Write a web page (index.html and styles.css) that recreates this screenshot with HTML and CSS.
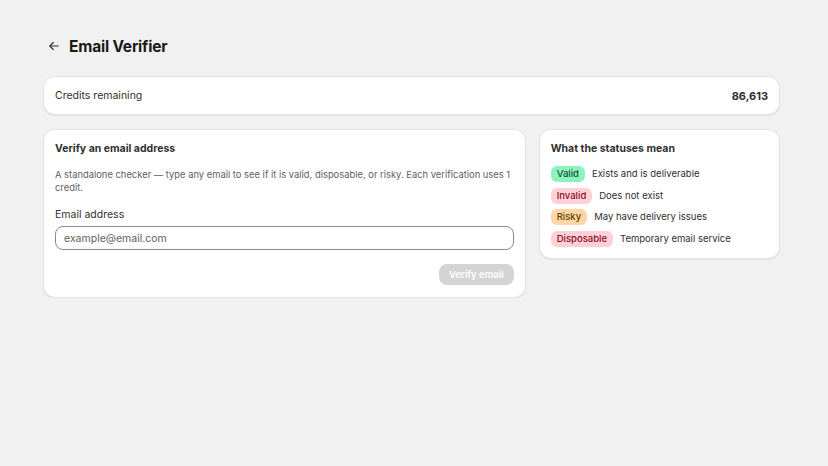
FILE: index.html
```html
<!DOCTYPE html>
<html lang="en">
<head>
    <meta charset="UTF-8">
    <meta name="viewport" content="width=device-width, initial-scale=1.0">
    <title>Email Verifier</title>
    <link rel="stylesheet" href="styles.css">
</head>
<body>

    <div class="page">
        <div class="page-header">
            <button class="back-btn" aria-label="Back">
                <svg width="14" height="14" viewBox="0 0 20 20" fill="none" stroke="#303030" stroke-width="1.6" stroke-linecap="round" stroke-linejoin="round">
                    <path d="M16 10H4.5"/>
                    <path d="M9 5l-5 5 5 5"/>
                </svg>
            </button>
            <h1>Email Verifier</h1>
        </div>

        <div class="card credits">
            <span>Credits remaining</span>
            <span class="credits-value">86,613</span>
        </div>

        <div class="layout">
            <div class="card verify">
                <h2>Verify an email address</h2>
                <p class="hint">A standalone checker — type any email to see if it is valid, disposable, or risky. Each verification uses 1 credit.</p>
                <label class="field-label" for="email">Email address</label>
                <input type="email" id="email" placeholder="example@email.com">
                <div class="actions">
                    <button class="primary" disabled>Verify email</button>
                </div>
            </div>

            <div class="card statuses">
                <h2>What the statuses mean</h2>
                <ul class="status-list">
                    <li><span class="badge success">Valid</span> Exists and is deliverable</li>
                    <li><span class="badge critical">Invalid</span> Does not exist</li>
                    <li><span class="badge warning">Risky</span> May have delivery issues</li>
                    <li><span class="badge critical">Disposable</span> Temporary email service</li>
                </ul>
            </div>
        </div>
    </div>

</body>
</html>
```

FILE: styles.css
```css
body {
    margin: 0;
    background-color: #f1f1f1;
    font-family: Inter, "Noto Sans", sans-serif;
    color: #303030;
    font-size: 10.5px;
}
.page {
    padding: 28px 48px 0 43px;
}
.page-header {
    display: flex;
    align-items: center;
    gap: 6px;
    height: 36px;
    margin-bottom: 12px;
}
.back-btn {
    width: 18px;
    height: 18px;
    margin-left: 2px;
    padding: 0;
    border: none;
    background: none;
    display: flex;
    align-items: center;
    justify-content: center;
}
h1 {
    margin: 0;
    font-size: 15.5px;
    font-weight: 700;
    letter-spacing: -0.2px;
    color: #1a1a1a;
}
h2 {
    margin: 0;
    font-size: 10.5px;
    font-weight: 650;
    line-height: 16px;
    color: #303030;
}
.card {
    background-color: white;
    border-radius: 12px;
    box-shadow: 0 1px 0 0 rgba(26, 26, 26, 0.07), inset 0 0 0 1px #e3e3e3, inset 0 -1px 0 0 #d4d4d4;
    padding: 12px;
}
.credits {
    display: flex;
    justify-content: space-between;
    align-items: center;
    line-height: 16px;
    padding: 12px 12px 11px;
}
.credits-value {
    font-weight: 650;
    font-size: 11px;
}
.layout {
    display: grid;
    grid-template-columns: 2fr 1fr;
    gap: 13px;
    margin-top: 14px;
    align-items: start;
}
.verify {
    padding-bottom: 13px;
}
.hint {
    margin: 12px 0 0;
    font-size: 9.4px;
    line-height: 12.5px;
    color: #616161;
}
.field-label {
    display: block;
    margin-top: 13px;
    line-height: 16px;
}
input {
    box-sizing: border-box;
    display: block;
    width: 100%;
    height: 24px;
    margin-top: 3px;
    padding: 0 8px;
    border: 1px solid #8a8a8a;
    border-radius: 8px;
    font-family: inherit;
    font-size: 10.5px;
    color: #303030;
}
input::placeholder {
    color: #616161;
}
.actions {
    display: flex;
    justify-content: flex-end;
    margin-top: 14px;
}
.primary {
    height: 21px;
    padding: 0 10px;
    border: none;
    border-radius: 8px;
    background-color: #d4d4d4;
    color: white;
    font-family: inherit;
    font-size: 9.5px;
    font-weight: 600;
}
.status-list {
    list-style: none;
    margin: 9px 0 0;
    padding: 0;
    display: flex;
    flex-direction: column;
    gap: 5.5px;
}
.status-list li {
    display: flex;
    align-items: center;
    gap: 7px;
    font-size: 9.5px;
    line-height: 16px;
}
.badge {
    display: inline-block;
    padding: 0 6px;
    border-radius: 6px;
    font-size: 9.5px;
    line-height: 16px;
    font-weight: 500;
}
.badge.success {
    background-color: #8ff2be;
    color: #0c5132;
}
.badge.critical {
    background-color: #fed1d7;
    color: #8e0b21;
}
.badge.warning {
    background-color: #ffd6a4;
    color: #5e4200;
}
```
